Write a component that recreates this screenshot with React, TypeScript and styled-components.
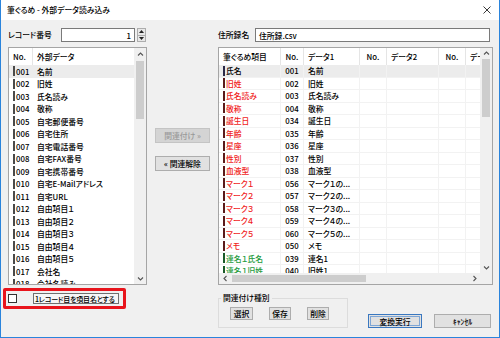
import React from 'react';
import styled, { createGlobalStyle } from 'styled-components';

const Global = createGlobalStyle`
  html, body { margin: 0; padding: 0; background: #fff; }
  body {
    font-family: "Noto Sans CJK JP", "Noto Sans", sans-serif;
    font-size: 7.8px;
    font-weight: 500;
    color: #000;
    font-feature-settings: "palt";
  }
  * { box-sizing: border-box; }
`;

const Window = styled.div`
  width: 500px;
  height: 338px;
  display: flex;
  flex-direction: column;
  border: 1px solid #2a84dc;
  border-top: none;
  background: #f0f0f0;
  overflow: hidden;
`;

const TitleBar = styled.div`
  height: 20px;
  flex-shrink: 0;
  background: #fff;
  display: flex;
  align-items: center;
  justify-content: space-between;
  padding: 0 8px 0 6px;
`;

const Title = styled.span`
  font-size: 7.8px;
  line-height: 10px;
`;

const Body = styled.div`
  flex: 1;
  display: flex;
  padding: 8px 0 0 7px;
`;

const LeftCol = styled.div`
  width: 139px;
  display: flex;
  flex-direction: column;
`;

const MiddleCol = styled.div`
  width: 71px;
  display: flex;
  flex-direction: column;
  gap: 13px;
  padding: 100px 0 0 8px;
`;

const RightCol = styled.div`
  width: 275px;
  display: flex;
  flex-direction: column;
`;

const FieldRow = styled.div`
  height: 14px;
  display: flex;
  align-items: center;
  margin-bottom: 5px;
`;

const FieldLabel = styled.span<{ $w: number }>`
  width: ${p => p.$w}px;
  flex-shrink: 0;
  line-height: 10px;
`;

const TextBox = styled.div<{ $w: number; $right?: boolean }>`
  width: ${p => p.$w}px;
  height: 14px;
  background: #fff;
  border: 1px solid #7a7a7a;
  display: flex;
  align-items: center;
  justify-content: ${p => (p.$right ? 'flex-end' : 'flex-start')};
  padding: 0 3px;
`;

const Spinner = styled.div`
  width: 9px;
  height: 14px;
  margin-left: 2px;
  display: flex;
  flex-direction: column;
  border: 1px solid #adadad;
  background: #e8e8e8;
`;

const SpinHalf = styled.div<{ $top?: boolean }>`
  flex: 1;
  display: flex;
  align-items: center;
  justify-content: center;
  border-bottom: ${p => (p.$top ? '1px solid #adadad' : 'none')};
`;

const ListBox = styled.div<{ $h?: boolean }>`
  height: 238px;
  border: 1px solid #a5a5a5;
  background: #fff;
  display: grid;
  grid-template-columns: 1fr 12px;
  grid-template-rows: ${p => (p.$h ? '1fr 11px' : '1fr')};
  overflow: hidden;
`;

const ListContent = styled.div`
  min-width: 0;
  overflow: hidden;
  white-space: nowrap;
`;

const HeaderRow = styled.div`
  height: 17px;
  display: flex;
  background: #fff;
`;

const HeaderCell = styled.div<{ $w: number; $center?: boolean }>`
  width: ${p => p.$w}px;
  flex-shrink: 0;
  height: 100%;
  display: flex;
  align-items: center;
  justify-content: ${p => (p.$center ? 'center' : 'flex-start')};
  padding-left: ${p => (p.$center ? 0 : 4)}px;
  border-right: 1px solid #e5e5e5;
  overflow: hidden;
`;

const Row = styled.div<{ $sel?: boolean; $grid?: boolean }>`
  height: 12.5px;
  display: flex;
  background: ${p => (p.$sel ? '#ececec' : 'transparent')};
  border-bottom: ${p => (p.$grid ? '1px solid #f2f2f2' : 'none')};
`;

const Cell = styled.div<{ $w: number; $center?: boolean; $grid?: boolean; $color?: string }>`
  width: ${p => p.$w}px;
  flex-shrink: 0;
  height: 100%;
  display: flex;
  align-items: center;
  justify-content: ${p => (p.$center ? 'center' : 'flex-start')};
  padding-left: ${p => (p.$center ? 0 : 4)}px;
  border-right: ${p => (p.$grid ? '1px solid #f2f2f2' : 'none')};
  color: ${p => p.$color || '#000'};
  overflow: hidden;
`;

const Marker = styled.span<{ $c: string }>`
  width: 1.5px;
  height: 10px;
  background: ${p => p.$c};
  margin-right: 1.5px;
  flex-shrink: 0;
`;

const VScroll = styled.div`
  background: #f0f0f0;
  display: flex;
  flex-direction: column;
`;

const ScrollArrow = styled.div<{ $w?: number; $h?: number }>`
  width: ${p => (p.$w ? `${p.$w}px` : 'auto')};
  height: ${p => (p.$h ? `${p.$h}px` : 'auto')};
  flex-shrink: 0;
  display: flex;
  align-items: center;
  justify-content: center;
`;

const VTrack = styled.div<{ $off: number }>`
  flex: 1;
  padding: ${p => p.$off}px 2px 0;
`;

const VThumb = styled.div<{ $len: number }>`
  height: ${p => p.$len}px;
  background: #cdcdcd;
`;

const HScroll = styled.div`
  background: #f0f0f0;
  display: flex;
  min-width: 0;
`;

const HTrack = styled.div<{ $off: number }>`
  flex: 1;
  padding: 2px 0 2px ${p => p.$off}px;
  display: flex;
`;

const HThumb = styled.div<{ $len: number }>`
  width: ${p => p.$len}px;
  background: #cdcdcd;
`;

const Corner = styled.div`
  background: #f0f0f0;
`;

const Button = styled.div<{ $w: number; $h: number; $variant?: 'disabled' | 'default' }>`
  width: ${p => p.$w}px;
  height: ${p => p.$h}px;
  flex-shrink: 0;
  display: flex;
  align-items: center;
  justify-content: center;
  white-space: nowrap;
  background: ${p => (p.$variant === 'disabled' ? '#d4d4d4' : '#e1e1e1')};
  color: ${p => (p.$variant === 'disabled' ? '#9a9a9a' : '#000')};
  border: ${p =>
    p.$variant === 'default' ? '1px solid #3a78c0' : p.$variant === 'disabled' ? '1px solid #c4c4c4' : '1px solid #adadad'};
  box-shadow: ${p => (p.$variant === 'default' ? 'inset 0 0 0 1px #e1e1e1, inset 0 0 0 2px #7ea6d6' : 'none')};
`;

const HighlightBox = styled.div`
  margin: 3px 0 0 -5px;
  width: 123px;
  height: 21px;
  border: 3px solid #e8141c;
  border-radius: 2px;
  display: flex;
  align-items: center;
  padding-left: 2px;
`;

const CheckBox = styled.div`
  width: 9px;
  height: 9px;
  border: 1px solid #333;
  background: #fff;
  flex-shrink: 0;
`;

const CheckLabel = styled.div`
  margin-left: 16px;
  width: 86px;
  height: 11px;
  border: 1px solid #707070;
  background: #f6f6f6;
  display: flex;
  align-items: center;
  padding-left: 1px;
  font-size: 7px;
  letter-spacing: -0.2px;
  white-space: nowrap;
  overflow: hidden;
`;

const BottomRow = styled.div`
  margin-top: 13px;
  height: 30px;
  display: flex;
  align-items: flex-end;
`;

const GroupBox = styled.div`
  width: 130px;
  height: 30px;
  border: 1px solid #dcdcdc;
  padding-left: 11px;
  display: flex;
  flex-direction: column;
  align-self: stretch;
`;

const GroupLegend = styled.span`
  align-self: flex-start;
  margin: -6px 0 0 -9px;
  padding: 0 2px;
  line-height: 10px;
  background: #f0f0f0;
`;

const GroupButtons = styled.div`
  display: flex;
  gap: 16px;
  margin-top: 4px;
`;

const ActionButtons = styled.div`
  display: flex;
  gap: 12px;
  margin-left: 20px;
`;

const Chevron = ({ dir }: { dir: 'up' | 'down' | 'left' | 'right' }) => {
  const d = {
    up: 'M1 4.5 L3.5 2 L6 4.5',
    down: 'M1 2.5 L3.5 5 L6 2.5',
    left: 'M4.5 1 L2 3.5 L4.5 6',
    right: 'M2.5 1 L5 3.5 L2.5 6',
  }[dir];
  return (
    <svg width="7" height="7" viewBox="0 0 7 7">
      <path d={d} stroke="#555" strokeWidth="1.1" fill="none" />
    </svg>
  );
};

const Tri = ({ up }: { up?: boolean }) => (
  <svg width="5" height="3" viewBox="0 0 5 3">
    <path d={up ? 'M0 3 L2.5 0 L5 3 Z' : 'M0 0 L2.5 3 L5 0 Z'} fill="#222" />
  </svg>
);

const leftRows: [string, string][] = [
  ['001', '名前'],
  ['002', '旧姓'],
  ['003', '氏名読み'],
  ['004', '敬称'],
  ['005', '自宅郵便番号'],
  ['006', '自宅住所'],
  ['007', '自宅電話番号'],
  ['008', '自宅FAX番号'],
  ['009', '自宅携帯番号'],
  ['010', '自宅E-Mailアドレス'],
  ['011', '自宅URL'],
  ['012', '自由項目１'],
  ['013', '自由項目２'],
  ['014', '自由項目３'],
  ['015', '自由項目４'],
  ['016', '自由項目５'],
  ['017', '会社名'],
  ['018', '会社名読み'],
];

type Kind = 'k' | 'r' | 'g';
const rightRows: [string, string, string, Kind][] = [
  ['氏名', '001', '名前', 'k'],
  ['旧姓', '002', '旧姓', 'r'],
  ['氏名読み', '003', '氏名読み', 'r'],
  ['敬称', '004', '敬称', 'r'],
  ['誕生日', '034', '誕生日', 'r'],
  ['年齢', '035', '年齢', 'r'],
  ['星座', '036', '星座', 'r'],
  ['性別', '037', '性別', 'r'],
  ['血液型', '038', '血液型', 'r'],
  ['マーク１', '056', 'マーク１の...', 'r'],
  ['マーク２', '057', 'マーク２の...', 'r'],
  ['マーク３', '058', 'マーク３の...', 'r'],
  ['マーク４', '059', 'マーク４の...', 'r'],
  ['マーク５', '060', 'マーク５の...', 'r'],
  ['メモ', '050', 'メモ', 'r'],
  ['連名１氏名', '039', '連名1', 'g'],
  ['連名１旧姓', '040', '旧姓1', 'g'],
];

const textColor: Record<Kind, string> = { k: '#000', r: '#f01c1c', g: '#1d9a3c' };
const markColor: Record<Kind, string> = { k: '#2a2a48', r: '#5a1a1a', g: '#1a5a2a' };

const rCols = [62, 23, 56, 27, 52, 27, 40];

export default function App() {
  return (
    <>
      <Global />
      <Window>
        <TitleBar>
          <Title>筆ぐるめ - 外部データ読み込み</Title>
          <svg width="8" height="8" viewBox="0 0 8 8">
            <path d="M0.5 0.5 L7.5 7.5 M7.5 0.5 L0.5 7.5" stroke="#222" strokeWidth="0.9" />
          </svg>
        </TitleBar>
        <Body>
          <LeftCol>
            <FieldRow>
              <FieldLabel $w={53}>レコード番号</FieldLabel>
              <TextBox $w={74} $right>1</TextBox>
              <Spinner>
                <SpinHalf $top><Tri up /></SpinHalf>
                <SpinHalf><Tri /></SpinHalf>
              </Spinner>
            </FieldRow>
            <ListBox>
              <ListContent>
                <HeaderRow>
                  <HeaderCell $w={24}>No.</HeaderCell>
                  <HeaderCell $w={110}>外部データ</HeaderCell>
                </HeaderRow>
                {leftRows.map(([n, name], i) => (
                  <Row key={n} $sel={i === 0}>
                    <Cell $w={24}>
                      <Marker $c="#4a4a4a" />
                      {n}
                    </Cell>
                    <Cell $w={100}>{name}</Cell>
                  </Row>
                ))}
              </ListContent>
              <VScroll>
                <ScrollArrow $h={12}><Chevron dir="up" /></ScrollArrow>
                <VTrack $off={1}><VThumb $len={58} /></VTrack>
                <ScrollArrow $h={12}><Chevron dir="down" /></ScrollArrow>
              </VScroll>
            </ListBox>
            <HighlightBox>
              <CheckBox />
              <CheckLabel>1レコード目を項目名とする</CheckLabel>
            </HighlightBox>
          </LeftCol>

          <MiddleCol>
            <Button $w={55} $h={15} $variant="disabled">関連付け »</Button>
            <Button $w={55} $h={15}>« 関連解除</Button>
          </MiddleCol>

          <RightCol>
            <FieldRow>
              <FieldLabel $w={37}>住所録名</FieldLabel>
              <TextBox $w={235}>住所録.csv</TextBox>
            </FieldRow>
            <ListBox $h>
              <ListContent>
                <HeaderRow>
                  <HeaderCell $w={rCols[0]}>筆ぐるめ項目</HeaderCell>
                  <HeaderCell $w={rCols[1]} $center>No.</HeaderCell>
                  <HeaderCell $w={rCols[2]}>データ1</HeaderCell>
                  <HeaderCell $w={rCols[3]} $center>No.</HeaderCell>
                  <HeaderCell $w={rCols[4]}>データ2</HeaderCell>
                  <HeaderCell $w={rCols[5]} $center>No.</HeaderCell>
                  <HeaderCell $w={rCols[6]}>データ3</HeaderCell>
                </HeaderRow>
                {rightRows.map(([item, no, data, kind], i) => (
                  <Row key={item} $sel={i === 0} $grid>
                    <Cell $w={rCols[0]} $grid $color={textColor[kind]}>
                      <Marker $c={markColor[kind]} />
                      {item}
                    </Cell>
                    <Cell $w={rCols[1]} $grid $center>{no}</Cell>
                    <Cell $w={rCols[2]} $grid>{data}</Cell>
                    <Cell $w={rCols[3]} $grid />
                    <Cell $w={rCols[4]} $grid />
                    <Cell $w={rCols[5]} $grid />
                    <Cell $w={rCols[6]} $grid />
                  </Row>
                ))}
              </ListContent>
              <VScroll>
                <ScrollArrow $h={11}><Chevron dir="up" /></ScrollArrow>
                <VTrack $off={0}><VThumb $len={58} /></VTrack>
                <ScrollArrow $h={11}><Chevron dir="down" /></ScrollArrow>
              </VScroll>
              <HScroll>
                <ScrollArrow $w={12}><Chevron dir="left" /></ScrollArrow>
                <HTrack $off={1}><HThumb $len={134} /></HTrack>
                <ScrollArrow $w={12}><Chevron dir="right" /></ScrollArrow>
              </HScroll>
              <Corner />
            </ListBox>
            <BottomRow>
              <GroupBox>
                <GroupLegend>関連付け種別</GroupLegend>
                <GroupButtons>
                  <Button $w={23} $h={13}>選択</Button>
                  <Button $w={22} $h={13}>保存</Button>
                  <Button $w={22} $h={13}>削除</Button>
                </GroupButtons>
              </GroupBox>
              <ActionButtons>
                <Button $w={54} $h={14} $variant="default">変換実行</Button>
                <Button $w={57} $h={14}>ｷｬﾝｾﾙ</Button>
              </ActionButtons>
            </BottomRow>
          </RightCol>
        </Body>
      </Window>
    </>
  );
}
